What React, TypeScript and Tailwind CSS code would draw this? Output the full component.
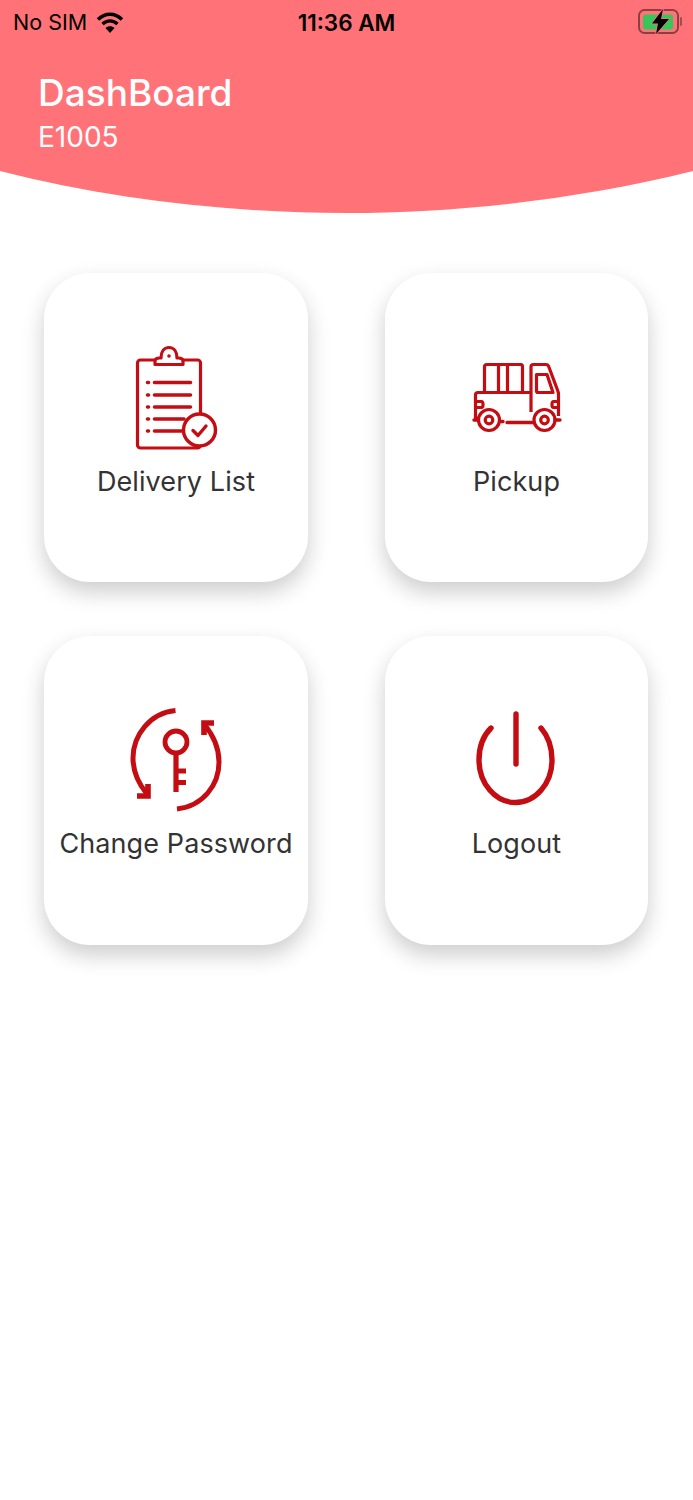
function WifiIcon() {
  return (
    <svg width="28" height="23" viewBox="0 0 28 23" fill="none" stroke="#000">
      <path d="M2 8.5C9 1.5 19 1.5 26 8.5" strokeWidth="3.6" />
      <path d="M6.5 13C11 8.8 17 8.8 21.5 13" strokeWidth="3.4" />
      <path d="M14 22L9.5 17C12 14.8 16 14.8 18.5 17Z" fill="#000" stroke="none" />
    </svg>
  );
}

function BatteryIcon() {
  return (
    <svg className="-mr-[2px]" width="44" height="28" viewBox="0 0 44 28" fill="none">
      <rect x="1" y="1" width="39" height="23" rx="5.5" stroke="#000" strokeOpacity="0.45" strokeWidth="2" />
      <path d="M43 9V16" stroke="#000" strokeOpacity="0.35" strokeWidth="2" strokeLinecap="round" />
      <rect x="5" y="5.5" width="30" height="15" rx="2.5" fill="#34c759" />
      <path d="M25 0L14 14.5H20L18 25L31 10H23Z" fill="#000" stroke="#ff7378" strokeWidth="1.5" paintOrder="stroke" />
    </svg>
  );
}

function ClipboardIcon() {
  return (
    <svg width="110" height="125" viewBox="0 0 110 125" fill="none" stroke="#c40d12" strokeWidth="3.2" strokeLinejoin="round">
      <rect x="17.5" y="25" width="63" height="88" rx="3" />
      <path d="M35 29.5H63V26.5C63 24 61 23 58.5 23H57C57 17 54 12.5 49 12.5C44 12.5 41 17 41 23H39.5C37 23 35 24 35 26.5Z" fill="#fff" />
      <circle cx="49" cy="21" r="1.8" fill="#c40d12" stroke="none" />
      <g strokeLinecap="round" strokeWidth="3.6">
        <path d="M34.5 47.5H70.5M34.5 60H70.5M34.5 72H70.5M34.5 84H64M34.5 96H64" />
        <path d="M27.5 47.5H28.5M27.5 60H28.5M27.5 72H28.5M27.5 84H28.5M27.5 96H28.5" />
      </g>
      <circle cx="79.5" cy="95" r="16" fill="#fff" strokeWidth="3.4" />
      <path d="M73 95.5L78 100.5L86 91" strokeWidth="3.4" strokeLinecap="round" />
    </svg>
  );
}

function TruckIcon() {
  return (
    <svg width="115" height="90" viewBox="0 0 115 90" fill="none" stroke="#c40d12" strokeWidth="3.2" strokeLinejoin="round">
      <path d="M24.5 43V17C24.5 15.5 25.5 14.5 27 14.5H61C62 14.5 62.5 15.5 62.5 17V43" />
      <path d="M38.5 15V43M47.5 15V43" />
      <path d="M18 68H15.5V45C15.5 43.5 16.5 42.5 18 42.5H70.5" />
      <path d="M71 62V17C71 15.5 72 14.5 73.5 14.5H86C87 14.5 88 15 88.5 16L97.5 40C98 41.5 98.5 42 98.5 44V66" />
      <path d="M76.5 24.5H87L93 42.5H78C77 42.5 76.5 42 76.5 41Z" />
      <path d="M15.5 51.5H21.5C22.5 51.5 23 52.5 23 54.5C23 56.5 22.5 57.5 21.5 57.5H15.5" />
      <path d="M98.5 51.5H93.5C92.5 51.5 92 52.5 92 54.5C92 56.5 92.5 57.5 93.5 57.5H98.5" />
      <circle cx="29" cy="70" r="10.5" fill="#fff" />
      <circle cx="29" cy="70" r="3.8" />
      <circle cx="84.5" cy="70" r="10.5" fill="#fff" />
      <circle cx="84.5" cy="70" r="3.8" />
      <path d="M14 70H18M40 71.5H43M47 72.5H73M95 70H100" strokeWidth="3.4" strokeLinecap="round" />
    </svg>
  );
}

function KeyIcon() {
  return (
    <svg width="110" height="120" viewBox="0 0 110 120" fill="none" stroke="#c40d12" strokeWidth="5">
      <path d="M55.5 10.5C30 13 13 35 13 58C13 71 18 83 27 94" />
      <path d="M17 96H28V84" strokeWidth="5.6" />
      <path d="M57 109C83 106 99 85 99 62C99 48 94 36 84 24" />
      <path d="M94 23H84V35" strokeWidth="5.6" />
      <circle cx="56" cy="42" r="11" strokeWidth="4.8" />
      <path d="M56 53V92M56 71H66M56 82.5H66" strokeWidth="5.2" />
    </svg>
  );
}

function PowerIcon() {
  return (
    <svg width="115" height="115" viewBox="0 0 115 115" fill="none" stroke="#c40d12" strokeWidth="5.4" strokeLinecap="round">
      <path d="M57 14V64" />
      <path d="M32 28C24 36 20 46 20 60C20 83.5 36.4 102.5 56.5 102.5C76.6 102.5 93 83.5 93 60C93 46 89 36 82 28" />
    </svg>
  );
}

function Tile({ icon, label, iconClass }: { icon: React.ReactNode; label: string; iconClass: string }) {
  return (
    <div className="flex h-[309px] flex-col items-center rounded-[46px] bg-white shadow-[0_10px_22px_rgba(0,0,0,0.2)]">
      <div className={iconClass}>{icon}</div>
      <span className="whitespace-nowrap text-[27px] leading-[34px] tracking-[0.1px] text-[#333333]">{label}</span>
    </div>
  );
}

export default function App() {
  return (
    <div className="min-h-screen bg-white font-['Inter',sans-serif]">
      <div className="bg-[#ff7378]">
        <div className="flex h-[45px] items-center justify-between px-[13px]">
          <div className="flex w-[200px] items-center gap-[9px] text-[21.5px] text-black">
            <span>No SIM</span>
            <WifiIcon />
          </div>
          <span className="text-[22.5px] font-semibold text-black">11:36 AM</span>
          <div className="flex w-[200px] justify-end">
            <BatteryIcon />
          </div>
        </div>
        <div className="h-[126px] pl-[38px] pt-[25px] text-white">
          <h1 className="text-[37px] font-medium leading-[46px]">DashBoard</h1>
          <p className="mt-[4px] text-[28px] leading-[34px]">E1005</p>
        </div>
      </div>
      <svg className="block" width="693" height="43" viewBox="0 0 693 43">
        <path d="M0 0H693C580 28 460 42 346 42C230 42 110 28 0 0Z" fill="#ff7378" />
      </svg>
      <div className="mt-[59px] grid grid-cols-[264px_263px] gap-x-[77px] gap-y-[54px] pl-[44px]">
        <Tile icon={<ClipboardIcon />} label="Delivery List" iconClass="mt-[62px] -ml-[2px] h-[130px]" />
        <Tile icon={<TruckIcon />} label="Pickup" iconClass="mt-[77px] ml-[2px] h-[115px]" />
        <Tile icon={<KeyIcon />} label="Change Password" iconClass="mt-[64px] -ml-[2px] h-[127px]" />
        <Tile icon={<PowerIcon />} label="Logout" iconClass="mt-[64px] h-[127px]" />
      </div>
    </div>
  );
}
